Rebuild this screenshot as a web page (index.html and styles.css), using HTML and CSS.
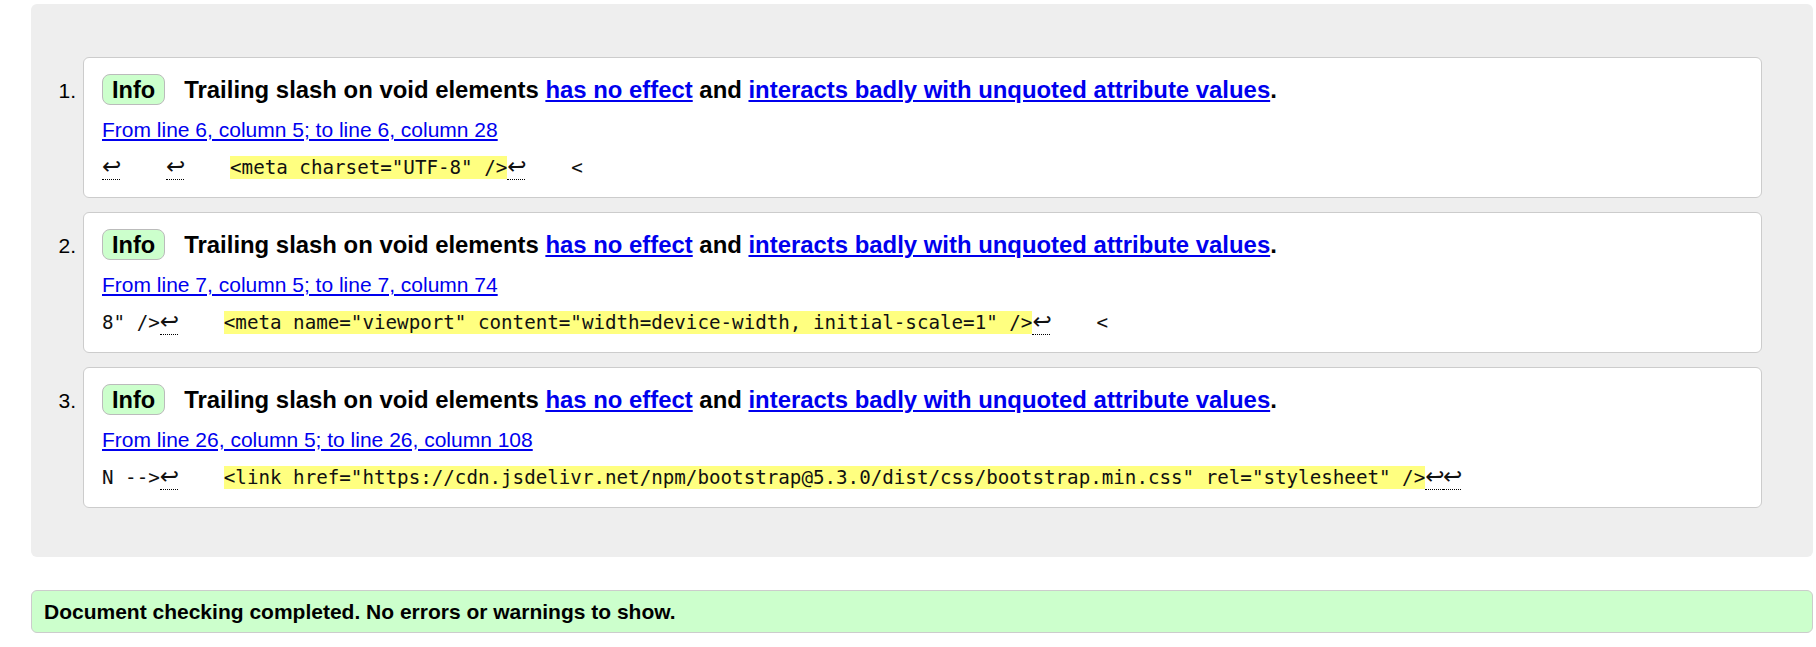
FILE: index.html
```html
<!DOCTYPE html>
<html lang="en">
<head>
<meta charset="utf-8">
<title>Nu Html Checker results</title>
<link rel="stylesheet" href="styles.css">
</head>
<body>
<div class="page">
  <section class="results">
    <ol class="msgs">
      <li class="msg">
        <span class="num">1.</span>
        <div class="card">
          <p class="title"><strong class="badge">Info</strong><span class="text">Trailing slash on void elements <a href="#">has no effect</a> and <a href="#">interacts badly with unquoted attribute values</a>.</span></p>
          <p class="loc"><a href="#">From line 6, column 5; to line 6, column 28</a></p>
          <p class="extract"><code><b class="lf" title="Line break">↩</b>    <b class="lf" title="Line break">↩</b>    <mark>&lt;meta charset="UTF-8" /&gt;</mark><b class="lf" title="Line break">↩</b>    &lt;</code></p>
        </div>
      </li>
      <li class="msg">
        <span class="num">2.</span>
        <div class="card">
          <p class="title"><strong class="badge">Info</strong><span class="text">Trailing slash on void elements <a href="#">has no effect</a> and <a href="#">interacts badly with unquoted attribute values</a>.</span></p>
          <p class="loc"><a href="#">From line 7, column 5; to line 7, column 74</a></p>
          <p class="extract"><code>8" /&gt;<b class="lf" title="Line break">↩</b>    <mark>&lt;meta name="viewport" content="width=device-width, initial-scale=1" /&gt;</mark><b class="lf" title="Line break">↩</b>    &lt;</code></p>
        </div>
      </li>
      <li class="msg">
        <span class="num">3.</span>
        <div class="card">
          <p class="title"><strong class="badge">Info</strong><span class="text">Trailing slash on void elements <a href="#">has no effect</a> and <a href="#">interacts badly with unquoted attribute values</a>.</span></p>
          <p class="loc"><a href="#">From line 26, column 5; to line 26, column 108</a></p>
          <p class="extract"><code>N --&gt;<b class="lf" title="Line break">↩</b>    <mark>&lt;link href="https://cdn.jsdelivr.net/npm/bootstrap@5.3.0/dist/css/bootstrap.min.css" rel="stylesheet" /&gt;</mark><b class="lf" title="Line break">↩</b><b class="lf" title="Line break">↩</b></code></p>
        </div>
      </li>
    </ol>
  </section>
  <p class="success">Document checking completed. No errors or warnings to show.</p>
</div>
</body>
</html>
```

FILE: styles.css
```css
body {
  margin: 0;
  font-family: "Liberation Sans", Arial, sans-serif;
  font-size: 21px;
  color: #000;
  background: #fff;
}

.page {
  padding: 4px 3px 0 31px;
}

.results {
  background: #eeeeee;
  border-radius: 6px;
  padding: 53px 51px 49px 0;
}

.msgs {
  list-style: none;
  margin: 0;
  padding: 0;
  display: flex;
  flex-direction: column;
  gap: 14px;
}

.msg {
  display: flex;
  align-items: baseline;
}

.num {
  flex: none;
  width: 52px;
  padding-right: 7px;
  box-sizing: border-box;
  text-align: right;
}

.card {
  flex: 1;
  min-width: 0;
  background: #fff;
  border: 1px solid #cccccc;
  border-radius: 6px;
  padding: 16px 18px 18px;
}

.title {
  display: flex;
  align-items: baseline;
  gap: 19px;
  margin: 0;
  font-size: 23.9px;
  font-weight: bold;
}

.badge {
  background: #ccffcc;
  border: 1px solid #bbbbbb;
  border-radius: 8px;
  padding: 2px 9px 0;
  line-height: 27px;
  font-size: 23.6px;
}

a {
  color: #0000ee;
}

.loc {
  margin: 13px 0 0;
  line-height: 24px;
}

.extract {
  margin: 14px 0 0;
  line-height: 23px;
  font-family: "DejaVu Sans Mono", "Liberation Mono", monospace;
  font-size: 19.2px;
  color: #111;
  white-space: pre;
}

.extract code {
  font-family: inherit;
  font-size: inherit;
}

mark {
  background: #ffff80;
  color: inherit;
}

.lf {
  font-family: "DejaVu Sans", sans-serif;
  font-size: 23px;
  letter-spacing: -1.47px;
  font-weight: normal;
  line-height: 0;
  border-bottom: 1px dotted #000;
}

.success {
  margin: 33px 0 0;
  background: #ccffcc;
  border: 1px solid #cccccc;
  border-radius: 6px;
  padding: 9px 12px 8px;
  font-weight: bold;
  line-height: 24px;
}
```
